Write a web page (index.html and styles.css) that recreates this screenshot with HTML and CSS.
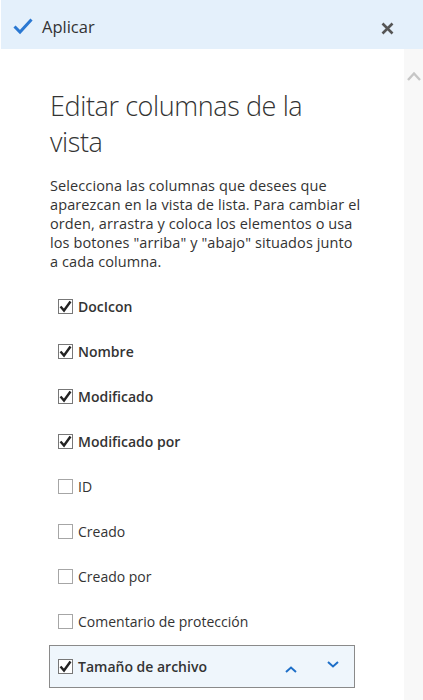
FILE: index.html
```
<html>

<head>
	<meta charset="utf-8">
	<link rel="stylesheet" href="styles.css">
</head>

<body>
	<div class="panel">
		<div class="topbar">
			<div class="apply">
				<svg class="apply-icon" width="20" height="17" viewBox="0 0 20 17">
					<polyline points="1.5,8.5 7,14 18.5,1.5" fill="none" stroke="#2a78d2" stroke-width="3"/>
				</svg>
				<span>Aplicar</span>
			</div>
			<svg class="close-icon" width="13" height="13" viewBox="0 0 13 13">
				<path d="M1.5 1.5 L11.5 11.5 M11.5 1.5 L1.5 11.5" stroke="#555" stroke-width="2.6"/>
			</svg>
		</div>
		<div class="main">
			<div class="content">
				<h1 class="title">Editar columnas de la vista</h1>
				<p class="intro">Selecciona las columnas que desees que aparezcan en la vista de lista. Para cambiar el orden, arrastra y coloca los elementos o usa los botones "arriba" y "abajo" situados junto a cada columna.</p>
				<div class="columns">
					<div class="col on"><span class="box"><svg width="13" height="13" viewBox="0 0 13 13"><polyline points="1.5,6.5 5,10.5 11.5,1.5" fill="none" stroke="#222" stroke-width="2.4"/></svg></span><span class="name">DocIcon</span></div>
					<div class="col on"><span class="box"><svg width="13" height="13" viewBox="0 0 13 13"><polyline points="1.5,6.5 5,10.5 11.5,1.5" fill="none" stroke="#222" stroke-width="2.4"/></svg></span><span class="name">Nombre</span></div>
					<div class="col on"><span class="box"><svg width="13" height="13" viewBox="0 0 13 13"><polyline points="1.5,6.5 5,10.5 11.5,1.5" fill="none" stroke="#222" stroke-width="2.4"/></svg></span><span class="name">Modificado</span></div>
					<div class="col on"><span class="box"><svg width="13" height="13" viewBox="0 0 13 13"><polyline points="1.5,6.5 5,10.5 11.5,1.5" fill="none" stroke="#222" stroke-width="2.4"/></svg></span><span class="name">Modificado por</span></div>
					<div class="col"><span class="box"></span><span class="name">ID</span></div>
					<div class="col"><span class="box"></span><span class="name">Creado</span></div>
					<div class="col"><span class="box"></span><span class="name">Creado por</span></div>
					<div class="col"><span class="box"></span><span class="name">Comentario de protección</span></div>
					<div class="col on selected"><span class="box"><svg width="13" height="13" viewBox="0 0 13 13"><polyline points="1.5,6.5 5,10.5 11.5,1.5" fill="none" stroke="#222" stroke-width="2.4"/></svg></span><span class="name">Tamaño de archivo</span>
						<span class="move up"><svg width="12" height="7" viewBox="0 0 12 7"><polyline points="1,6 6,1.5 11,6" fill="none" stroke="#1e6fc8" stroke-width="2"/></svg></span>
						<span class="move down"><svg width="12" height="7" viewBox="0 0 12 7"><polyline points="1,1 6,5.5 11,1" fill="none" stroke="#1e6fc8" stroke-width="2"/></svg></span>
					</div>
				</div>
			</div>
			<div class="scrollbar">
				<svg width="14" height="10" viewBox="0 0 14 10"><polyline points="1,9 7,2.5 13,9" fill="none" stroke="#c6c6c6" stroke-width="2.4"/></svg>
			</div>
		</div>
	</div>
</body>

</html>
```

FILE: styles.css
```
body {
	margin: 0;
	background-color: #FFFFFF;
	font-family: "Open Sans", "Noto Sans", sans-serif;
	color: #333333;
	overflow: hidden;
}

.panel {
	width: 423px;
	height: 700px;
	display: flex;
	flex-direction: column;
}

.topbar {
	height: 49px;
	box-sizing: border-box;
	margin-left: 1px;
	background-color: #e4f0fb;
	display: flex;
	align-items: center;
	justify-content: space-between;
	padding: 3px 29px 0 12px;
	flex-shrink: 0;
}

.apply {
	display: flex;
	align-items: center;
	gap: 9px;
	font-size: 16.5px;
	color: #333333;
}

.apply-icon {
	margin-top: 1px;
}

.close-icon {
	margin-top: 4px;
}

.main {
	flex: 1;
	display: flex;
	min-height: 0;
}

.content {
	flex: 1;
	padding: 39px 0 0 50px;
}

.scrollbar {
	width: 19px;
	background-color: #f8f8f8;
	display: flex;
	justify-content: center;
	padding-top: 22px;
	align-items: flex-start;
}

.title {
	margin: 0;
	font-size: 27px;
	font-weight: 300;
	letter-spacing: -0.4px;
	line-height: 36px;
	color: #333333;
	width: 300px;
}

.intro {
	margin: 16px 0 0 0;
	font-size: 14.5px;
	letter-spacing: 0.1px;
	line-height: 19px;
	width: 311px;
	color: #333333;
}

.columns {
	margin: 14px 0 0 -1px;
}

.col {
	width: 306px;
	height: 43px;
	margin-bottom: 2px;
	box-sizing: border-box;
	border: 1px solid transparent;
	padding-left: 8px;
	display: flex;
	align-items: center;
	font-size: 14px;
}

.box {
	width: 15px;
	height: 15px;
	box-sizing: border-box;
	border: 1px solid #a6a6a6;
	background-color: #FFFFFF;
	display: flex;
	align-items: center;
	justify-content: center;
	margin-right: 5px;
	flex-shrink: 0;
}

.on .box {
	border-color: #777777;
}

.on .name {
	font-weight: 600;
}

.selected {
	background-color: #eff6fc;
	border-color: #8a8a8a;
}

.selected .name {
	flex: 1;
}

.move {
	width: 42px;
	height: 100%;
	display: flex;
	align-items: center;
	justify-content: center;
}

.up svg {
	margin-top: 5px;
}

.down svg {
	margin-top: -5px;
}
```
